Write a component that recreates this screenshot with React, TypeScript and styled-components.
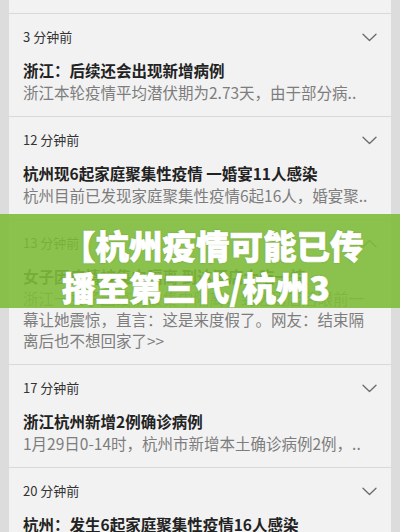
import React from "react";
import styled, { createGlobalStyle } from "styled-components";

const GlobalStyle = createGlobalStyle`
  html, body { margin: 0; padding: 0; }
  body {
    background: #dcdcdc;
    font-family: "Noto Sans CJK SC", "Noto Sans", sans-serif;
    overflow: hidden;
  }
`;

const Page = styled.div`
  position: relative;
  width: 400px;
  height: 532px;
  overflow: hidden;
  background: #dcdcdc;
  padding: 0 9px;
  box-sizing: border-box;
`;

const Card = styled.div`
  background: #f2f2f2;
  padding-top: 13px;
  min-height: 100%;
`;

const Item = styled.div`
  border-top: 1px solid #d9d9d9;
  padding: 13px 14px 13px 14px;
`;

const TimeRow = styled.div`
  display: flex;
  align-items: center;
  justify-content: space-between;
  height: 20px;
`;

const Time = styled.span`
  font-size: 13px;
  line-height: 20px;
  color: #333333;
`;

const Chevron = styled.svg<{ $up?: boolean }>`
  width: 15px;
  height: 9px;
  transform: ${(p) => (p.$up ? "rotate(180deg)" : "none")};
`;

const Title = styled.div`
  margin-top: 12px;
  font-size: 15.5px;
  line-height: 22px;
  font-weight: 700;
  color: #222222;
  white-space: nowrap;
  overflow: hidden;
`;

const Summary = styled.div<{ $expanded?: boolean }>`
  margin-top: 1px;
  font-size: 15.5px;
  line-height: 21px;
  color: #7d7d7d;
  white-space: ${(p) => (p.$expanded ? "normal" : "nowrap")};
  overflow: hidden;
`;

const Banner = styled.div`
  position: absolute;
  left: 0;
  right: 0;
  top: 214px;
  height: 94px;
  background: rgba(128, 188, 60, 0.9);
  box-sizing: border-box;
  padding: 10px 22px 0 62px;
  overflow: hidden;
`;

const BannerText = styled.div`
  font-size: 33.5px;
  line-height: 42px;
  font-weight: 900;
  color: #ffffff;
  -webkit-text-stroke: 0.7px #ffffff;
  text-shadow: 0 0 2px rgba(40, 70, 10, 0.4);
`;

type News = {
  time: string;
  title: string;
  summary: string;
  expanded?: boolean;
};

const news: News[] = [
  {
    time: "3 分钟前",
    title: "浙江：后续还会出现新增病例",
    summary: "浙江本轮疫情平均潜伏期为2.73天，由于部分病..",
  },
  {
    time: "12 分钟前",
    title: "杭州现6起家庭聚集性疫情 一婚宴11人感染",
    summary: "杭州目前已发现家庭聚集性疫情6起16人，婚宴聚..",
  },
  {
    time: "13 分钟前",
    title: "女子因疫情被集中隔离 到达酒店大吃一惊",
    summary:
      "浙江一女子因疫情被集中隔离，到达酒店后眼前一幕让她震惊，直言：这是来度假了。网友：结束隔离后也不想回家了>>",
    expanded: true,
  },
  {
    time: "17 分钟前",
    title: "浙江杭州新增2例确诊病例",
    summary: "1月29日0-14时，杭州市新增本土确诊病例2例，..",
  },
  {
    time: "20 分钟前",
    title: "杭州：发生6起家庭聚集性疫情16人感染",
    summary: "杭州目前已发现家庭聚集性疫情6起16人..",
  },
];

const ChevronIcon: React.FC<{ up?: boolean }> = ({ up }) => (
  <Chevron $up={up} viewBox="0 0 15 9" fill="none">
    <polyline
      points="1,1.2 7.5,7.5 14,1.2"
      stroke="#6a6a6a"
      strokeWidth="1.3"
      strokeLinecap="round"
      strokeLinejoin="round"
    />
  </Chevron>
);

export default function App() {
  return (
    <>
      <GlobalStyle />
      <Page>
        <Card>
          {news.map((n) => (
            <Item key={n.time}>
              <TimeRow>
                <Time>{n.time}</Time>
                <ChevronIcon up={n.expanded} />
              </TimeRow>
              <Title>{n.title}</Title>
              <Summary $expanded={n.expanded}>{n.summary}</Summary>
            </Item>
          ))}
        </Card>
        <Banner>
          <BannerText>【杭州疫情可能已传播至第三代/杭州3</BannerText>
        </Banner>
      </Page>
    </>
  );
}
